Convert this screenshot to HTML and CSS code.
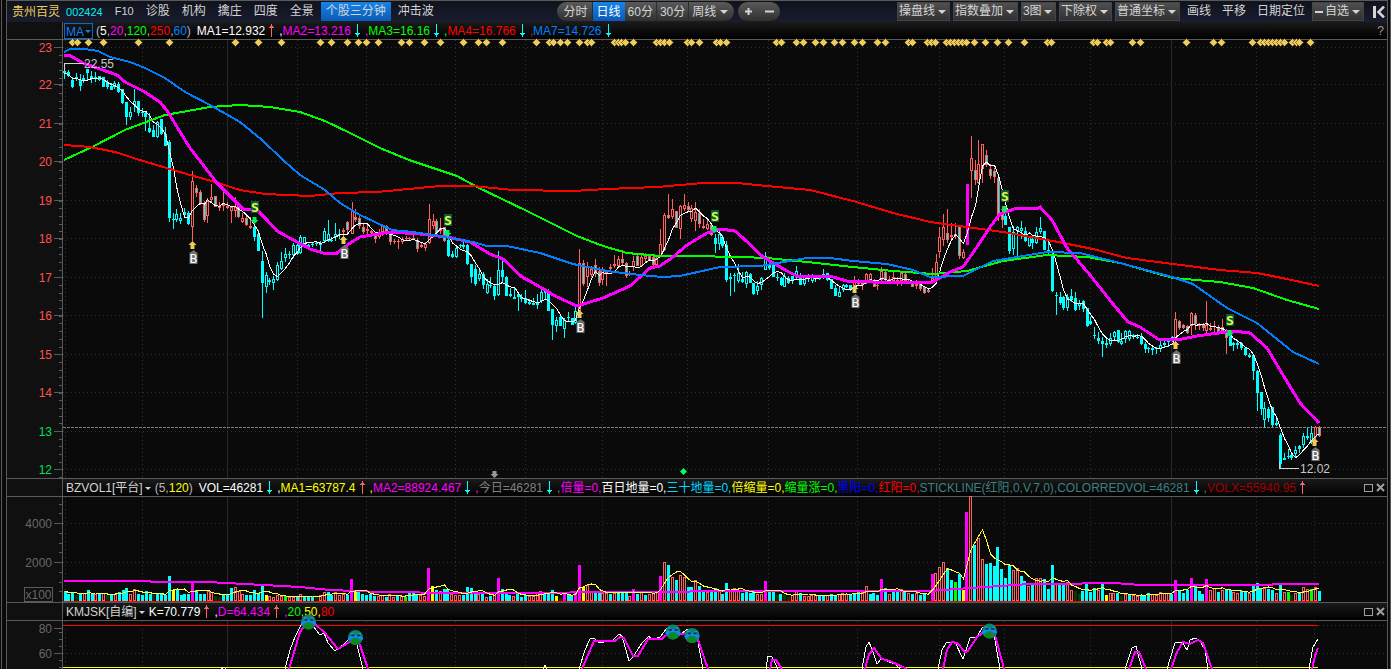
FILE: index.html
```
<!DOCTYPE html>
<html lang="zh-CN">
<head>
<meta charset="utf-8">
<title>贵州百灵 002424</title>
<link rel="stylesheet" href="styles.css">
</head>
<body>
<div class="frame">
<main class="terminal">
  <nav class="toolbar">
    <div class="group tabs">
      <span class="stock">贵州百灵</span>
      <span class="code">002424</span>
      <button class="tab latin">F10</button>
      <button class="tab">诊股</button>
      <button class="tab">机构</button>
      <button class="tab">擒庄</button>
      <button class="tab">四度</button>
      <button class="tab">全景</button>
      <button class="tab active">个股三分钟</button>
      <button class="tab">冲击波</button>
    </div>
    <div class="group middle">
      <div class="pill">
        <button>分时</button><button class="on">日线</button><button>60分</button><button>30分</button><span class="drop"><select aria-label="周期"><option>周线</option></select></span>
      </div>
      <div class="pill zoomer">
        <button aria-label="放大"><svg width="9" height="9" viewBox="0 0 9 9"><path d="M3.5 1h2v2.500h2.500v2h-2.500v2.500h-2v-2.500H1v-2h2.500z"/></svg></button>
        <button aria-label="缩小"><svg width="9" height="9" viewBox="0 0 9 9"><path d="M0 3.500h9v2H0z"/></svg></button>
      </div>
    </div>
    <div class="group right">
      <span class="drop box"><select aria-label="操盘线"><option>操盘线</option></select></span>
      <span class="drop box"><select aria-label="指数叠加"><option>指数叠加</option></select></span>
      <span class="drop box"><select aria-label="图数"><option>3图</option></select></span>
      <span class="drop box"><select aria-label="除权"><option>下除权</option></select></span>
      <span class="drop box"><select aria-label="坐标"><option>普通坐标</option></select></span>
      <button class="tab">画线</button>
      <button class="tab">平移</button>
      <button class="tab">日期定位</button>
      <span class="drop box minus"><select aria-label="自选"><option>自选</option></select></span>
      <button class="collapse" aria-label="收起"><svg width="12" height="12" viewBox="0 0 12 12"><path d="M0 0h3v12H0z"/><path d="M11 0.500L5.500 6L11 11.500" fill="none" stroke="#d4d4d4" stroke-width="2.500"/></svg></button>
    </div>
  </nav>

  <section class="panel">
    <div class="gutter"></div>
    <header class="info first">
      <span class="drop ma"><select aria-label="指标"><option>MA</option></select></span>
      <span class="silver">(</span><span class="white">5</span><span class="silver">,</span><span class="magenta">20</span><span class="silver">,</span><span class="green">120</span><span class="silver">,</span><span class="red">250</span><span class="silver">,</span><span class="blue">60</span><span class="silver gap">)</span>
      <span class="white">MA1=12.932</span><i class="up"></i>
      <span class="white">,</span><span class="magenta">MA2=13.216</span><i class="down"></i>
      <span class="magenta">,</span><span class="green">MA3=16.16</span><i class="down"></i>
      <span class="green">,</span><span class="red">MA4=16.766</span><i class="down"></i>
      <span class="red">,</span><span class="blue">MA7=14.726</span><i class="down"></i>
      <button class="help">?</button>
    </header>
    <div class="axis"><svg id="price-axis" width="55" height="438" viewBox="7 40 55 438"></svg></div>
    <div class="plot"><svg id="price" height="438" viewBox="63 40 1324 438" preserveAspectRatio="none"></svg></div>
  </section>

  <section class="panel">
    <div class="gutter"></div>
    <header class="info">
      <button class="name">BZVOL1[平台]</button>
      <span class="silver">(5,</span><span class="yellow">120</span><span class="silver gap">)</span>
      <span class="white">VOL=46281</span><i class="down"></i>
      <span class="white">,</span><span class="yellow">MA1=63787.4</span><i class="up"></i>
      <span class="yellow">,</span><span class="magenta">MA2=88924.467</span><i class="down"></i>
      <span class="magenta">,</span><span class="gray">今日=46281</span><i class="down"></i>
      <span class="gray">,</span><span class="magenta">倍量=0,</span><span class="white">百日地量=0,</span><span class="sky">三十地量=0,</span><span class="yellow">倍缩量=0,</span><span class="green">缩量涨=0,</span><span class="navy">黑阳=0,</span><span class="red">红阳=0,</span><span class="teal">STICKLINE(红阳,0,V,7,0),COLORREDVOL=46281</span><i class="down"></i>
      <span class="teal">,</span><span class="maroon">VOLX=55940.95</span><i class="up"></i>
      <span class="tools"><button class="max" aria-label="最大化"></button><button class="close" aria-label="关闭"><svg width="9" height="9" viewBox="0 0 9 9"><path d="M1 1L8 8M8 1L1 8"/></svg></button></span>
    </header>
    <div class="axis"><svg id="volume-axis" width="55" height="105" viewBox="7 497 55 105"></svg></div>
    <div class="plot"><svg id="volume" height="105" viewBox="63 497 1324 105" preserveAspectRatio="none"></svg></div>
  </section>

  <section class="panel">
    <div class="gutter"></div>
    <header class="info">
      <button class="name">KMJSK[自编]</button>
      <span class="white">K=70.779</span><i class="up"></i>
      <span class="white">,</span><span class="magenta">D=64.434</span><i class="up"></i>
      <span class="magenta">,</span><span class="green">20</span><span class="silver">,</span><span class="yellow">50,</span><span class="red">80</span>
      <span class="tools"><button class="max" aria-label="最大化"></button><button class="close" aria-label="关闭"><svg width="9" height="9" viewBox="0 0 9 9"><path d="M1 1L8 8M8 1L1 8"/></svg></button></span>
    </header>
    <div class="axis"><svg id="kdj-axis" width="55" height="48" viewBox="7 621 55 48"></svg></div>
    <div class="plot"><svg id="kdj" height="48" viewBox="63 621 1324 48" preserveAspectRatio="none"></svg></div>
  </section>
</main>
</div>
<script src="chart.js"></script>
</body>
</html>
```
FILE: styles.css
```
* { box-sizing: border-box; }
body {
  margin: 0;
  background: #0a0a0a;
  overflow: hidden;
  font: 12px/16px "Liberation Sans", "Noto Sans CJK SC", sans-serif;
  color: #d4d4d4;
}
button, select {
  font: inherit;
  color: inherit;
  background: none;
  border: 0;
  border-radius: 0;
  margin: 0;
  padding: 0;
  appearance: none;
  white-space: nowrap;
}
.frame {
  margin-left: 1px;
  padding: 0 2px 0 4px;
  border-left: 1px solid #5a5a5a;
  border-right: 1px solid #5a5a5a;
}
.terminal {
  border: 1px solid #5a5a5a;
  border-bottom: 0;
}
.toolbar {
  display: flex;
  justify-content: space-between;
  height: 21px;
  background: linear-gradient(#10121c, #181c2e);
  font-size: 12px;
}
.group { display: flex; align-items: center; }
.stock { color: #efcb5a; margin: 0 6px 0 5px; }
.code { color: #00f0f0; font-size: 11px; margin-right: 6px; }
.tab { padding: 0 6px; height: 19px; line-height: 19px; }
.latin { font-size: 11px; }
.tab.active {
  background: linear-gradient(#1484ea, #0a5ab4);
  padding: 0 5px;
  margin: 0 1px 0 1px;
}
.middle { gap: 4px; }
.pill {
  display: flex;
  align-items: center;
  height: 19px;
  border-radius: 10px;
  overflow: hidden;
  background: linear-gradient(#5a5a5a, #303030);
}
.pill button {
  height: 19px;
  padding: 0 3px;
  border-right: 1px solid #2e2e2e;
}
.pill button:first-child { padding: 0 4px 0 7px; }
.pill .on { background: linear-gradient(#1484ea, #0a5ab4); color: #fff; padding: 0 4px; border: 0; }
.zoomer button, .zoomer button:first-child { border: 0; padding: 0 6px; display: flex; align-items: center; }
.zoomer svg, .collapse svg { fill: #d4d4d4; }
.drop { position: relative; display: inline-flex; }
.drop select { padding: 0 17px 0 3px; height: 19px; }
.drop::after {
  content: "";
  position: absolute;
  right: 4px;
  top: 8px;
  border: 4px solid transparent;
  border-top-color: #d4d4d4;
  border-bottom: 0;
  pointer-events: none;
}
.pill .drop::after { right: 6px; }
.right { gap: 3px; padding-right: 2px; }
.right .tab { padding: 0 4px; }
.box {
  background: linear-gradient(#505050, #303030);
  border: 1px solid #444;
}
.box select { padding: 0 13px 0 1px; height: 17px; line-height: 17px; }
.box::after { top: 7px; right: 3px; }
.box.minus select { padding-left: 12px; }
.minus::before {
  content: "";
  position: absolute;
  left: 2px;
  top: 8px;
  width: 8px;
  height: 2px;
  background: #d4d4d4;
}
.collapse { display: flex; margin-left: 6px; }

.panel {
  display: grid;
  grid-template-columns: 56px minmax(0, 1fr);
  grid-template-rows: 19px auto;
}
.panel:has(.first) { grid-template-rows: 18px auto; }
.gutter, .axis { background: #101010; }
.gutter { border-bottom: 1px solid #5a5a5a; border-right: 1px solid #5a5a5a; }
.axis { border-right: 1px solid #5a5a5a; }
.info {
  display: flex;
  align-items: center;
  padding-left: 3px;
  background: linear-gradient(#1a1a1a, #000);
  border-bottom: 1px solid #5a5a5a;
  border-top: 1px solid #5a5a5a;
  white-space: pre;
  min-width: 0;
}
.gutter { border-top: 1px solid #5a5a5a; }
.first { border-top: 0; padding-left: 1px; }
.panel:has(.first) .gutter { border-top: 0; }
.panel svg { display: block; }
.plot { background: #0a0a0a; }
.plot svg { width: 100%; overflow: visible; }
.ma { border: 1px solid #0a6cc8; margin-right: 3px; color: #1080f0; }
.drop.ma select { height: 14px; padding: 0 8px 0 1px; }
.drop.ma::after { border-width: 3px 3px 0; border-top-color: #1080f0; right: 1px; top: 6px; }
.gap { margin-right: 6px; }
.name { padding-right: 9px; margin-right: 3px; position: relative; height: 16px; }
.name::after {
  content: "";
  position: absolute;
  right: 1px;
  top: 7px;
  border: 3px solid transparent;
  border-top-color: #d4d4d4;
  border-bottom: 0;
}
.up, .down {
  width: 5px;
  height: 13px;
  flex: none;
  margin: 0 5px 0 4px;
  color: #ff6464;
  background:
    linear-gradient(currentColor, currentColor) 2px 0 / 1px 13px no-repeat,
    linear-gradient(currentColor, currentColor) 1px 2px / 3px 1px no-repeat,
    linear-gradient(currentColor, currentColor) 0 3px / 5px 1px no-repeat;
}
.down { color: #00ffff; transform: rotate(180deg); }
.help { margin-left: auto; margin-right: 3px; color: #999; }
.tools { margin-left: auto; display: flex; gap: 3px; margin-right: 2px; align-items: center; }
.max { width: 9px; height: 8px; border: 1px solid #a0a0a0; }
.close { display: flex; }
.close svg { stroke: #a0a0a0; stroke-width: 2; }

.white { color: #fff; }
.silver { color: #b8b8b8; }
.gray { color: #808080; }
.magenta { color: #ff00ff; }
.green { color: #00ff00; }
.red { color: #ff0000; }
.blue { color: #0080ff; }
.yellow { color: #ffff00; }
.sky { color: #00d8ff; }
.navy { color: #0000ff; }
.teal { color: #3d8080; }
.maroon { color: #a00000; }

svg text { font: 12px "Liberation Sans", sans-serif; }
svg .mark { font: 13px "DejaVu Sans Mono", monospace; }
svg .sell { font-weight: bold; }
.line { fill: none; shape-rendering: crispEdges; }
.grid { stroke: #303030; stroke-dasharray: 1 3; }
.solid { stroke: #2a2a2a; }
```
FILE: chart.js
```
const NS = 'http://www.w3.org/2000/svg';
const CYAN = '#00ffff', RED = '#ff6060', BG = '#0a0a0a', MAG = '#ff00ff';

function add(parent, tag, attrs, text) {
  const el = document.createElementNS(NS, tag);
  for (const k in attrs) el.setAttribute(k, attrs[k]);
  if (text) el.textContent = text;
  parent.appendChild(el);
  return el;
}
const $ = id => document.getElementById(id);
const rect = (p, x, y, w, h, fill) => add(p, 'rect', { x, y, width: w, height: h, fill, 'shape-rendering': 'crispEdges' });
const line = (p, points, stroke, width) =>
  add(p, 'polyline', { points, stroke, 'stroke-width': width, class: 'line' });

// Each chunk: first x, last x, candles as kind+high,low,bodyTop,bodyBottom.
// Kinds: c falling, h rising, r rising (held), p falling (held), m limit-up.
const candleChunks = [
[64, 347, 'c64,79,71,73 c70,77,72,76 c77,88,80,87 h73,81,77,79 c74,91,80,86 h75,83,78,80 c69,80,69,73 c71,83,76,79 c72,82,77,79 c76,81,76,80 c77,87,77,87 c80,89,82,87 c83,90,86,90 h81,89,83,87 c82,93,84,92 c89,104,89,103 c102,125,102,117 h107,120,112,117 h89,112,101,105 c101,116,101,113 c108,117,112,113 c112,131,113,117 c113,133,128,132 c125,137,130,137 h121,138,122,137 c119,135,119,134 c127,146,134,146 c140,222,142,218 c213,229,219,220 h209,222,214,220 h213,224,218,221 c208,217,212,215 c211,225,213,224 r171,241,181,227 p185,197,188,193 p190,205,192,203 p201,222,203,220 r198,223,201,216 r184,203,197,200 p196,207,196,207 r202,211,206,208 p190,211,204,206 p202,209,206,208 r206,223,207,211 r197,217,207,211 p205,218,206,217 r213,223,218,222 p215,226,218,225 p217,229,226,228 c224,241,227,237 c230,251,234,251 c251,318,261,283 h272,293,275,287 c278,285,280,282 h276,290,279,283 h262,281,265,280 h252,270,261,269 h248,262,254,258 c251,259,254,255 h243,258,245,255 h244,255,245,254 h235,254,237,253 h237,248,237,247 c244,249,245,247 c243,247,244,245 h241,246,243,244 c241,253,243,245 h228,243,231,241 h220,242,234,241 c237,242,240,241 h223,241,234,237 c229,239,234,235 r228,239,230,232 p221,235,222,230'],
[351.500, 683.500, 'r202,234,211,234 p209,222,217,220 p215,229,218,226 p224,234,227,232 p225,234,229,231 p230,235,231,233 p232,243,234,239 r229,239,232,237 r225,236,226,232 p225,235,226,234 p232,245,233,242 p239,244,241,242 p239,249,241,242 r237,244,239,242 p236,240,238,239 p237,240,238,239 p234,240,238,239 p238,252,240,249 p243,248,245,247 r242,251,244,248 r204,244,219,243 r214,229,221,226 p219,234,221,233 r218,234,228,231 p227,242,227,241 c238,257,240,256 c251,258,254,257 h247,258,248,257 c244,248,245,246 h239,249,245,247 c244,265,245,264 c264,283,264,277 c265,286,269,284 h270,281,274,279 c272,289,274,285 h279,294,284,293 c277,288,285,286 c285,300,286,296 h251,296,270,295 c260,283,270,277 c276,296,277,296 c288,297,294,296 c288,299,297,299 c294,311,294,297 c294,302,297,299 c290,304,298,303 c299,305,302,304 c298,305,303,305 h294,309,303,305 h289,303,292,301 c288,300,289,293 c289,311,291,311 c309,340,309,325 h317,332,320,326 c315,326,317,326 h318,338,320,329 c312,321,317,318 c318,325,318,325 h306,324,311,323 r249,311,263,311 p260,286,263,284 r262,287,267,277 r266,277,269,275 p259,277,265,274 p267,286,271,283 r267,285,270,280 p271,286,272,273 p264,272,267,269 r255,268,264,266 r256,268,259,266 p250,265,259,263 p262,278,263,276 r271,276,273,275 r256,271,261,267 p253,266,256,266 r254,266,257,266 r253,263,256,259 p254,261,256,260 p254,267,257,265 r256,268,258,265 r229,257,244,257 r213,251,215,250 p194,219,215,218 r199,219,209,217 p211,228,211,228 r205,239,206,229 r194,211,205,209'],
[687.500, 970.500, 'p202,212,206,210 r205,222,208,219 r202,231,212,221 p209,228,213,224 r219,229,226,228 r219,230,224,229 p224,236,225,235 c234,253,238,244 h230,250,234,244 c235,248,237,246 c241,282,245,280 c273,296,277,279 c273,292,275,276 h264,283,273,281 c272,283,279,282 h271,288,272,284 c273,283,274,283 c283,295,283,294 h281,295,286,291 h277,290,278,285 h252,270,256,270 c258,270,264,268 c264,277,264,277 c273,281,277,278 c277,286,278,285 h273,287,276,287 c276,284,278,283 c276,284,276,281 h266,280,271,277 c273,285,275,285 h275,286,276,284 c274,282,277,279 h274,283,276,281 c275,282,276,279 c275,280,278,279 h269,279,274,277 c273,281,273,280 c279,289,279,289 c285,296,288,296 h286,297,292,297 h284,292,285,290 c284,288,285,287 c285,291,285,289 r276,290,281,286 p279,286,280,284 p281,290,282,285 r273,284,274,283 r273,283,274,280 p279,287,280,287 r283,290,285,286 r267,282,271,280 p271,282,272,280 p276,282,279,281 r271,282,277,281 p277,286,280,284 r272,286,273,281 p273,284,274,281 r280,284,281,283 p281,287,282,287 r280,289,284,286 p282,291,284,289 p287,294,287,293 p289,293,290,292 r268,283,278,281 r254,283,262,281 r227,258,237,252 r214,246,227,240 p209,243,233,240 r223,241,235,237 p223,239,234,235 p225,259,226,256 r249,259,252,258 m184,245,184,245 r136,198,158,171'],
[974.500, 1318.500, 'p160,185,170,180 r140,184,164,183 r144,183,144,169 p150,167,155,165 p164,179,169,176 p168,183,171,177 p175,221,178,216 p206,228,212,220 c210,225,216,225 c227,254,227,251 h226,255,232,249 h226,260,227,231 h221,239,228,231 c227,242,231,241 h236,247,237,246 c236,249,239,243 h227,244,232,243 h217,234,228,232 c231,250,231,250 c240,254,250,251 c250,292,254,291 c292,315,295,296 c292,305,297,303 c296,310,297,308 h294,311,297,308 c289,302,296,300 c292,311,298,310 h300,310,303,306 c300,312,301,309 c308,327,308,326 c317,325,321,324 c327,339,335,336 c332,344,338,341 c337,357,341,344 c339,348,343,345 h333,346,338,344 h331,340,332,337 c330,343,330,342 h333,345,341,344 h330,343,331,339 h330,341,331,339 c334,339,335,337 c334,339,337,338 c333,345,336,344 c342,353,344,349 c347,353,348,349 c347,355,348,350 c347,354,348,349 h341,352,345,349 h339,348,343,345 c338,347,339,342 c336,342,337,340 r312,344,319,338 p320,330,321,328 p324,329,325,328 p325,334,326,333 r312,335,313,326 p313,330,315,324 p323,330,325,326 p323,331,325,328 r301,333,325,331 r323,331,328,330 r321,333,326,327 p325,333,327,332 p319,333,327,331 p329,354,331,338 c335,346,337,346 c342,351,343,345 h341,349,343,345 c342,350,343,348 c347,356,348,355 h353,358,355,357 c354,380,355,371 c370,411,371,393 c392,415,392,409 h402,428,408,420 c407,422,409,418 c407,427,407,425 c417,426,423,425 c433,468,435,464 c453,460,458,460 c449,459,456,457 c452,460,455,458 h446,457,450,454 c445,453,446,449 h433,448,436,445 h428,440,436,438 h426,444,433,442 r426,439,427,437 p426,437,427,436'],
];
// Volume bars: kind+height. m doubled, y shrunk, g low, d lowest.
const volumeChunks = [
[64.500, 459, 'c10 c7 c9 d6 c7 r8 c11 c7 r7 c7 r8 d6 c7 r7 c9 c11 c13 r7 r12 c7 c6 c10 c7 d6 c7 c7 c6 c25 y11 c11 c6 c7 c7 m19 c11 c7 c7 r10 r9 d5 d4 c7 c7 c13 r14 r10 r7 c6 c6 c11 c8 c15 y6 r5 r4 r6 r5 g5 r4 r4 c4 r7 c4 c5 c5 d4 r6 r9 c9 c6 r9 r6 r7 c6 m22 y9 c9 c7 c6 c7 c5 r5 r6 c4 r7 r4 c5 r5 g4 c8 c8 c7 r6 r5 m33 y15 c11 r10 c12 c12 r7 r6 r6'],
[463, 916, 'c6 c14 c13 c10 r7 c7 r4 c5 r6 m23 c12 c9 c6 r5 c9 c4 c6 r5 r5 r8 r10 c7 c8 c11 y5 d3 m9 c6 c5 m10 m36 y14 r16 r9 c8 c10 r8 r8 c7 r8 c9 c9 c10 r5 m12 c7 r10 c6 r7 r9 r9 m25 r39 c36 r24 c21 r26 r24 c14 c14 r21 c15 c11 r9 c10 c13 r11 c7 c18 r11 r13 r11 c8 c9 c8 c9 r7 r7 m20 c10 c9 d6 c7 d6 d4 r6 r11 c8 r5 r5 r6 r6 c5 c5 r6 c7 c6 r7 r8 r7 c6 c8 c9 r9 r15 c7 c8 c6 m22 c13 r7 c10 c9 r12 c10 r8 c7 r8'],
[920, 1318.500, 'c6 c7 d6 m27 r28 r34 r39 c33 c21 g19 c27 y11 m89 r105 c56 r63 r42 c37 c38 c35 c54 c32 c23 c36 r31 r33 c25 c20 r15 c18 r23 r23 c22 c12 c36 r17 c16 c16 r19 r11 d10 d7 c10 c18 c9 c13 r11 c17 y6 r8 r8 c8 d5 r7 c6 r6 r5 c6 c6 c8 r7 r6 r9 r8 r8 c7 m21 c11 c8 c11 m23 c16 c10 c7 m22 r11 r13 c9 r11 c12 c11 r9 r8 c10 c9 r8 c15 c18 c12 r13 c12 c11 r8 c16 r9 g9 d6 r8 c8 r14 r12 g12 r14 c10'],
];
function expand(chunks) {
  const out = [];
  for (const [x0, x1, s] of chunks) {
    const items = s.split(' ');
    items.forEach((it, i) => out.push({
      x: Math.round(x0 + (x1 - x0) * i / (items.length - 1)),
      kind: it[0],
      v: it.slice(1).split(',').map(Number),
    }));
  }
  return out;
}
function average(items, value, n) {
  return items.map((it, i) => {
    const part = items.slice(Math.max(0, i - n + 1), i + 1);
    return (it.x + 0.5) + ',' + (part.reduce((s, c) => s + value(c), 0) / part.length).toFixed(1);
  }).join(' ');
}

const gridX = [65, 142, 227, 297, 366, 455, 525, 602, 687, 768, 857, 939, 1004, 1090, 1171, 1256, 1314];
function grid(p, top, bottom, ys) {
  for (const x of gridX)
    add(p, 'line', { x1: x + .5, x2: x + .5, y1: top, y2: bottom, class: x === 227 || x === 1171 ? 'solid' : 'grid' });
  for (const y of ys) add(p, 'line', { x1: 63, x2: 1387, y1: y + .5, y2: y + .5, class: 'grid' });
}
function axis(p, labels, step, from, to) {
  for (const [y, t, fill] of labels) {
    rect(p, 54, y, 8, 1, '#5a5a5a');
    add(p, 'text', { x: 52, y: y + 5, 'text-anchor': 'end', fill }, t);
  }
  for (let y = from; y < to; y += step) rect(p, 59, Math.round(y), 3, 1, '#5a5a5a');
}

// Price panel
const price = $('price');
const levels = [47, 84, 123, 161, 200, 238, 277, 315, 354, 392, 431, 469];
axis($('price-axis'), levels.map((y, i) => [y, String(23 - i), i < 10 ? '#ff5050' : '#00e060']), 7.68, 47, 478);
grid(price, 40, 478, levels);
add(price, 'line', { x1: 63, x2: 1387, y1: 427.5, y2: 427.5, stroke: '#808080', 'stroke-dasharray': '3 1' });

const diamonds = [72,77,88,103,138,169,235,258,281,320,331,347,358,366,378,401,409,424,440,463,478,486,502,536,549,553,560,567,579,587,591,614,618,621,625,633,656,660,664,669,687,691,699,716,720,726,776,781,796,803,815,823,834,842,854,862,877,885,908,912,927,931,935,946,950,954,958,962,966,974,985,997,1008,1024,1047,1051,1093,1097,1106,1110,1132,1140,1186,1213,1221,1252,1260,1264,1268,1272,1276,1280,1284,1292,1296,1299,1310];
for (const x of diamonds)
  add(price, 'path', { d: `M${x - 3.5} 42.5l4 -4l4 4l-4 4z`, fill: '#efcb5a', stroke: '#3c3418', 'stroke-width': .6 });

const candles = expand(candleChunks);
for (const { x, kind, v: [hi, lo, top, bot] } of candles) {
  const outer = { c: CYAN, h: CYAN, r: RED, p: RED, m: RED }[kind];
  const h = Math.max(1, bot - top);
  rect(price, x, hi, 1, Math.max(1, lo - hi), outer);
  rect(price, x - 1, top, 3, h, outer);
  if (h > 2 && kind !== 'c') rect(price, x, top + 1, 1, h - 2, { h: BG, r: BG, p: CYAN, m: MAG }[kind]);
  if (kind === 'm') rect(price, x - 1, top, 3, h, MAG);
}
line(price, average(candles, c => c.v[c.kind === 'c' || c.kind === 'p' ? 3 : 2], 5), '#fff', 1);
line(price, '64,160 92,147 125,130 165,115 210,107 240,105 270,107 300,112 325,121 350,133 380,148 409,160 457,176 477,187 527,211 577,236 603,246 627,253 660,256 690,256 740,257 767,258 807,262 853,267 893,271 933,274 967,271 1003,261 1047,255 1087,257 1120,263 1173,278 1220,282 1253,288 1287,300 1319,309', '#00ff00', 2);
line(price, '64,145 90,147 115,152 143,161 190,175 215,182 240,190 265,194 310,196 340,193 377,192 440,186 473,186 513,190 573,191 607,189 657,187 703,183 737,183 767,186 810,190 853,201 893,213 930,222 1003,232 1053,241 1093,249 1127,258 1173,264 1220,270 1257,273 1287,279 1319,286', '#ff0000', 2);
line(price, '64,55 69,55 83,63 117,75 125,82 143,91 160,102 168,112 177,127 190,148 207,170 217,183 243,209 257,210 267,220 277,231 297,242 310,249 323,253 337,253 350,243 360,237 390,232 420,234 447,237 470,242 490,254 503,259 522,277 533,283 540,287 557,297 577,306 603,298 630,286 650,268 660,266 673,257 687,245 707,233 720,229 735,231 743,238 763,257 787,271 797,276 833,277 847,281 873,282 933,282 950,272 963,267 977,247 990,227 1000,214 1017,208 1037,209 1040,207 1052,220 1067,248 1090,275 1113,304 1128,322 1140,327 1158,339 1177,340 1197,336 1233,331 1250,333 1267,348 1280,370 1300,403 1319,423', MAG, 3);
line(price, '64,52 70,49 85,49 98,51 110,57 130,62 145,68 165,78 185,92 210,105 240,122 262,140 283,160 300,175 325,190 340,203 360,215 392,230 413,232 433,235 473,242 487,246 507,246 540,253 573,264 607,271 640,275 663,277 680,276 720,267 760,266 807,258 830,258 853,261 887,264 913,270 930,277 963,276 993,261 1047,252 1080,253 1120,263 1172,277 1193,284 1227,308 1257,323 1293,352 1319,364', '#0080ff', 2);

for (const [x, y] of [[192, 242], [343, 237], [579, 311], [854, 286], [1175, 342], [1314, 439]]) {
  add(price, 'path', { d: `M${x + .5} ${y - 1}l4 4h-2v4h-4v-4h-2z`, fill: '#efcb5a' });
  add(price, 'path', { d: `M${x + 1.5} ${y + 8}l4 3v11h-8v-11z`, fill: '#707070' });
  add(price, 'text', { x: x + 1.5, y: y + 21, 'text-anchor': 'middle', fill: '#fff', class: 'mark' }, 'B');
}
for (const [x, y] of [[254, 207], [447, 220], [714, 216], [1004, 196], [1229, 320]]) {
  rect(price, x - 3, y - 6, 8, 12, '#0a5a3c');
  add(price, 'text', { x: x + 1, y: y + 5, 'text-anchor': 'middle', fill: '#e0ff40', class: 'mark sell' }, 'S');
  add(price, 'path', { d: `M${x + .5} ${y + 17}l4 -4h-2v-3h-4v3h-2z`, fill: '#00f060' });
}
line(price, '64.500,71 64.500,63.500 84,63.500', '#d4d4d4', 1);
add(price, 'text', { x: 84, y: 68, fill: '#c8c8c8' }, '22.55');
line(price, '1279.500,462 1279.500,468.500 1299,468.500', '#d4d4d4', 1);
add(price, 'text', { x: 1300, y: 473, fill: '#c8c8c8' }, '12.02');
add(price, 'path', { d: 'M494.500 478l-4 -4h2v-3h4v3h2z', fill: '#989898' });
add(price, 'path', { d: 'M680 471.500l3.500 -3.500l3.500 3.500l-3.500 3.500z', fill: '#00ff60' });

// Volume panel
const volume = $('volume');
const volumeAxis = $('volume-axis');
axis(volumeAxis, [[523, '4000', '#686868'], [562, '2000', '#686868']], 9.75, 503.500, 600);
add(volumeAxis, 'rect', { x: 24.500, y: 587.500, width: 28, height: 14, fill: 'none', stroke: '#5a5a5a' });
add(volumeAxis, 'text', { x: 38.500, y: 599, 'text-anchor': 'middle', fill: '#686868' }, 'x100');
grid(volume, 497, 602, [523, 562]);
const bars = expand(volumeChunks);
rect(volume, 63, 601, 1256, 1, '#ff0000');
for (const { x, kind, v: [h] } of bars) {
  rect(volume, x - 1, 601 - h, 3, h, { c: CYAN, r: RED, m: MAG, y: '#ffff00', g: '#00ff00', d: '#003c00' }[kind]);
  if (kind === 'r') rect(volume, x, 602 - h, 1, h - 2, BG);
}
line(volume, '64,581 150,581 151,582 208,582 245,584 300,587 330,590 380,592 460,593 680,592 700,591 930,591 970,588 1000,586 1030,584 1075,584 1090,583 1115,583 1140,585 1270,585 1275,584 1319,584', MAG, 2);
line(volume, average(bars, b => 601 - b.v[0], 5), '#ffff40', 1);

// K/D panel
const kdj = $('kdj');
axis($('kdj-axis'), [[628, '80', '#686868'], [653, '60', '#686868']], 7, 632, 669);
grid(kdj, 621, 669, [625, 653]);
rect(kdj, 63, 625, 1255, 1, '#ff0000');
rect(kdj, 63, 667, 1255, 1, '#ffff00');
for (const pts of ['285,669 290,650 295,637 302,623 310,622 320,635 324,633 328,643 335,651 343,645 352,636 355,637 363,669', '221,669 224,667 226,669', '543,669 545,665 547,669', '579,669 585,650 590,639 594,638 598,642 604,642 613,640 619,634 622,636 629,661 633,657 642,643 649,636 652,640 660,637 667,628 675,637 682,633 688,629 697,637 703,669', '766,669 768,656 772,657 778,669', '862,669 866,647 869,642 873,652 877,664 881,659 895,664 900,669', '938,669 942,650 946,643 955,642 963,659 970,638 977,637 982,628 990,626 995,640 1000,669', '1125,669 1132,648 1136,646 1142,669', '1167,669 1175,643 1182,642 1187,650 1190,640 1195,638 1200,641 1205,650 1208,669', '1309,669 1313,647 1318,639'])
  line(kdj, pts, '#fff', 1);
for (const pts of ['289,669 300,632 308,622 315,624 325,633 338,649 348,643 355,637 360,645 368,669', '582,669 594,641 615,641 620,637 624,638 633,656 638,656 648,639 662,639 670,632 678,635 690,632 697,637 708,669', '770,669 772,660 776,660 782,669', '865,669 869,654 874,648 882,659 890,661 907,669', '943,669 947,650 952,642 957,643 965,652 968,651 977,637 988,629 995,635 1004,669', '1129,669 1135,652 1139,652 1146,669', '1171,669 1177,652 1183,642 1190,644 1198,640 1203,643 1212,669', '1312,669 1315,656 1318,648'])
  line(kdj, pts, MAG, 2);
for (const [x, y] of [[308.500, 622], [355.500, 637.500], [673, 632], [692, 635.500], [989.500, 631]]) {
  add(kdj, 'circle', { cx: x, cy: y, r: 7.500, fill: '#0c8468' });
  add(kdj, 'path', { d: `M${x - 5} ${y + 5.500}q5 -9 10 0q-5 4 -10 0z`, fill: '#0a8a1c' });
  add(kdj, 'path', { d: `M${x - 7} ${y + 2}q7 -7 14 0`, fill: 'none', stroke: '#1488ff', 'stroke-width': 2.500 });
  add(kdj, 'path', { d: `M${x - 4} ${y - 2}h3M${x + 1.500} ${y - 2}h3`, stroke: '#00285a', 'stroke-width': 1.500 });
  add(kdj, 'path', { d: `M${x - 5} ${y - 4}h3M${x + 2.500} ${y - 4}h3`, stroke: '#14a0e0', 'stroke-width': 1 });
}
```
